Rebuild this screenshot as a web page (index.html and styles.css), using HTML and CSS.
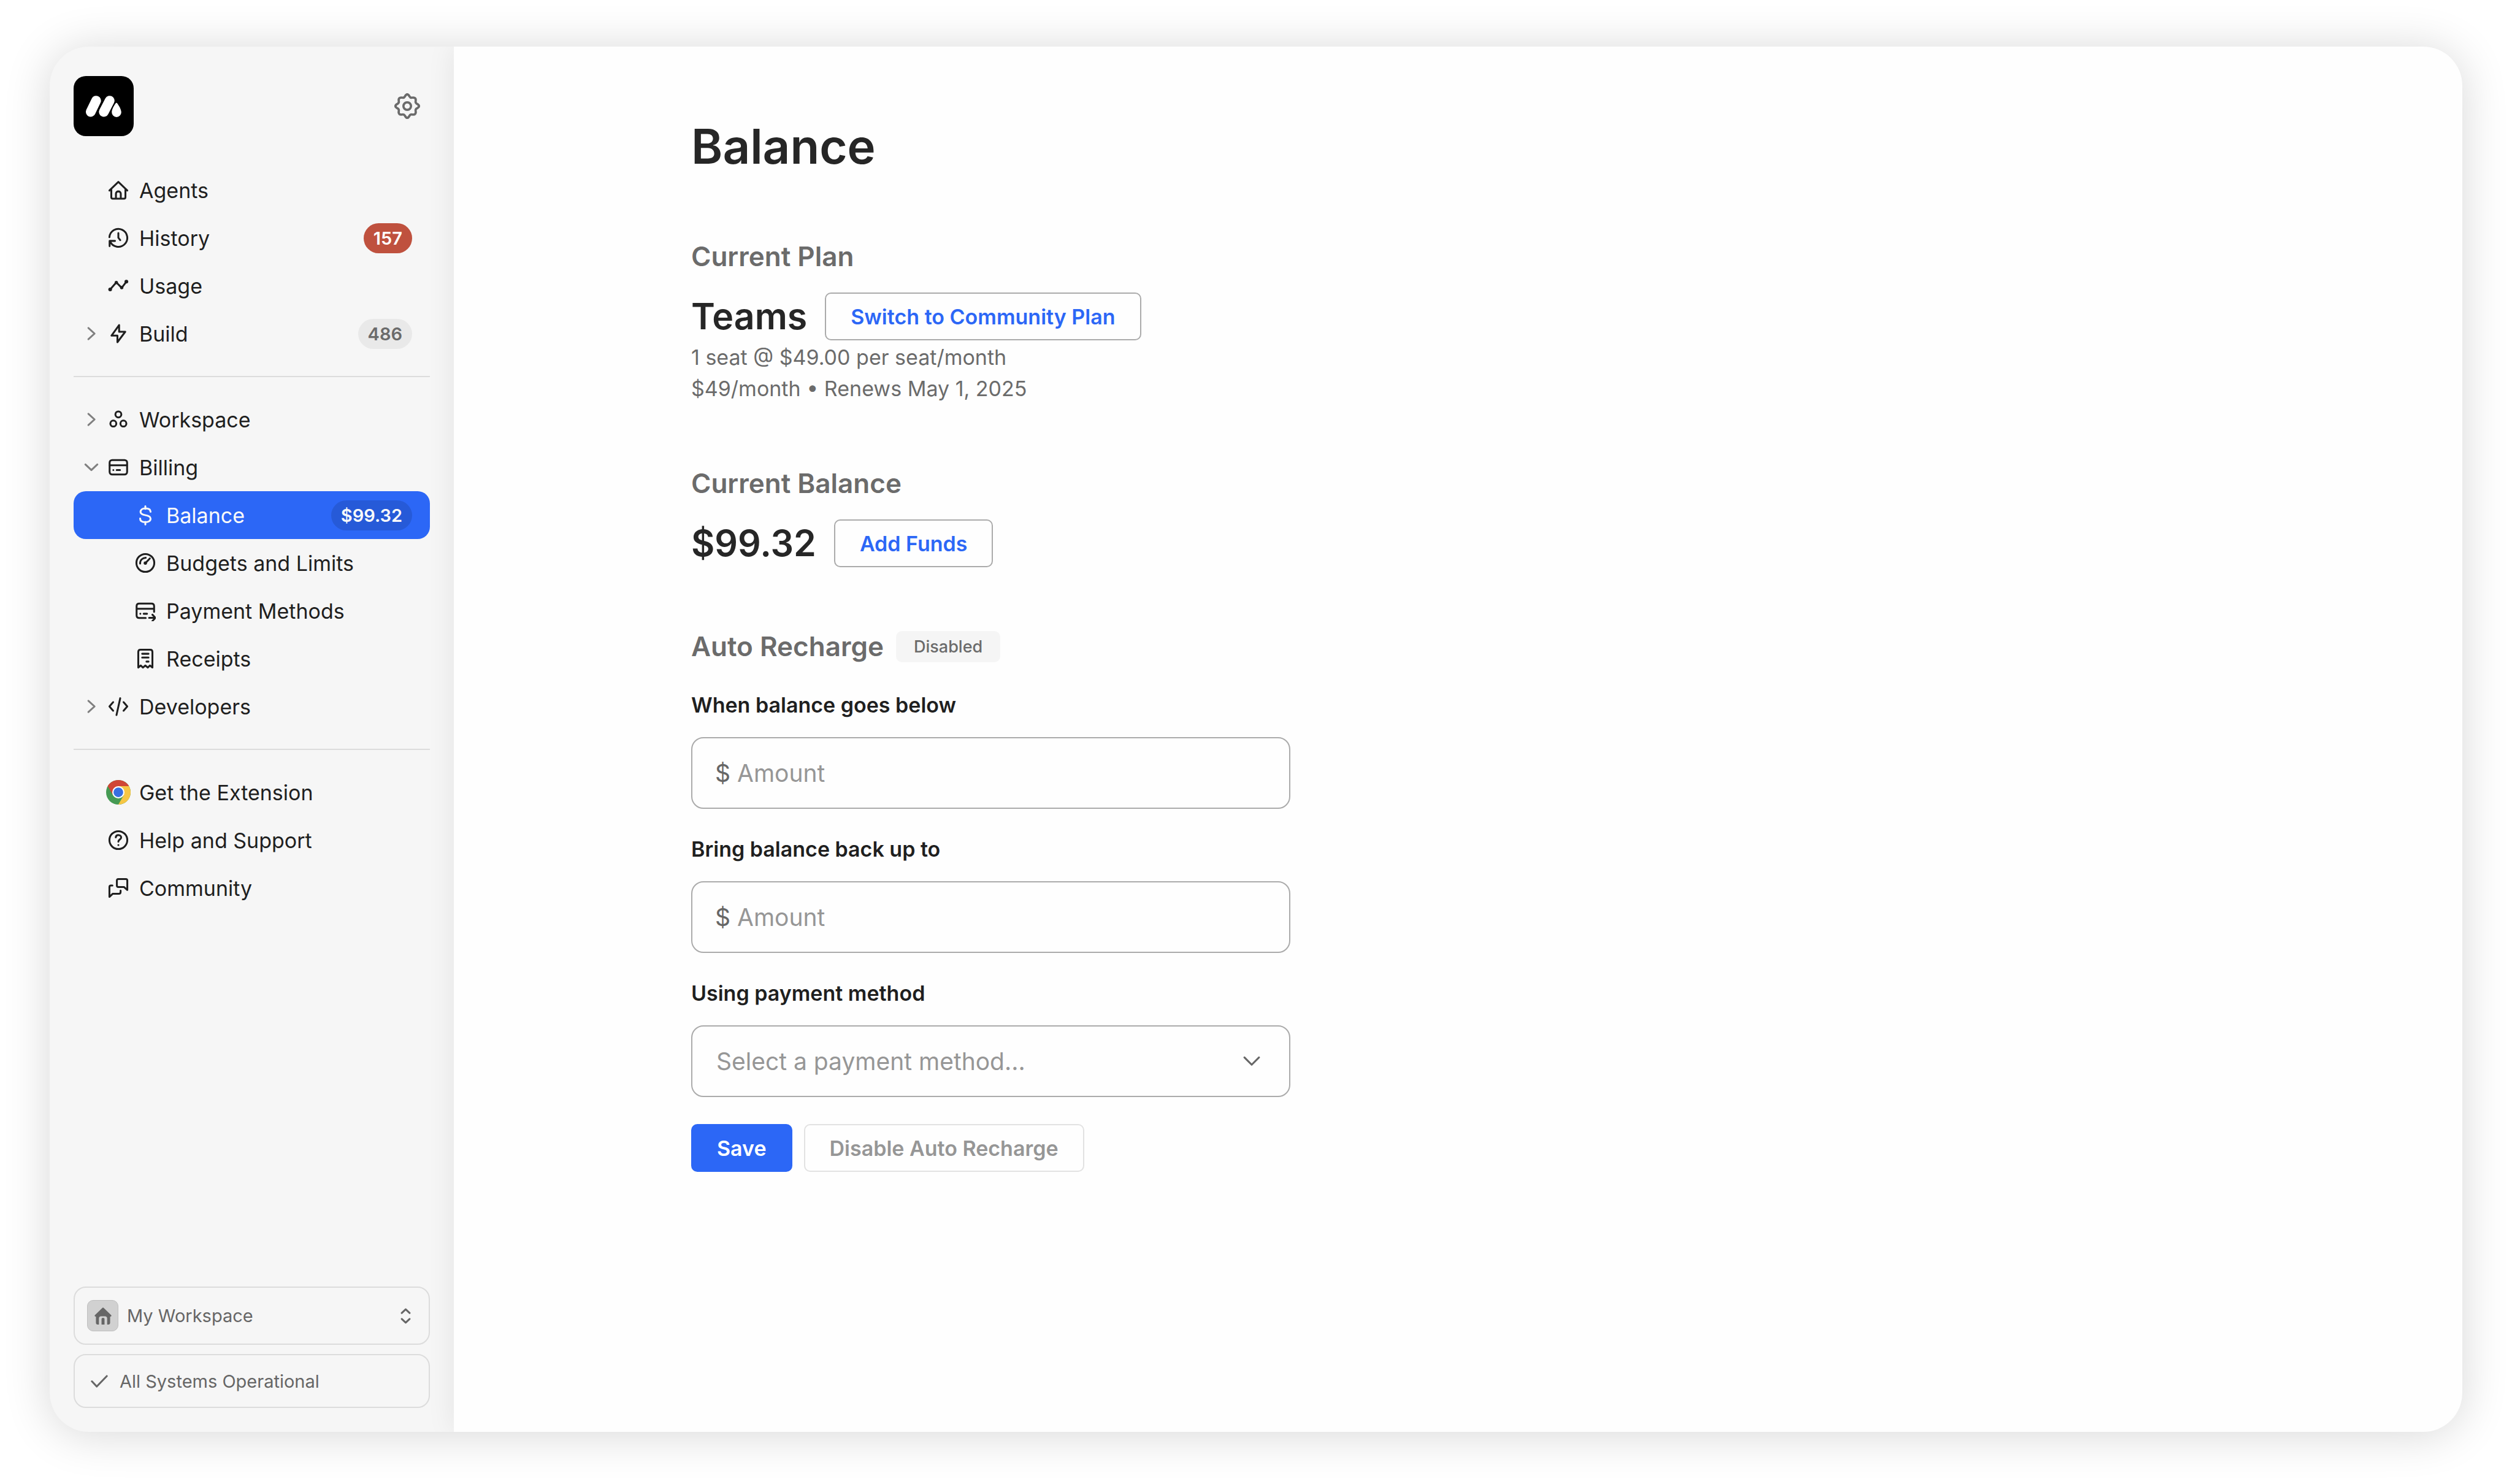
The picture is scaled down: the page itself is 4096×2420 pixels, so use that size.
FILE: index.html
```html
<!DOCTYPE html>
<html lang="en">
<head>
<meta charset="utf-8">
<title>Balance</title>
<meta name="viewport" content="width=device-width, initial-scale=1">
<link rel="stylesheet" href="styles.css">
</head>
<body>
<div class="window">
  <aside class="sidebar">
    <header class="sidebar-head">
      <a class="logo" href="#" aria-label="Home">
        <svg viewBox="0 0 160 160"><path d="M45.5 95.5 60 65.5M80.5 95.5 96 65.5" stroke="#fff" stroke-width="26" stroke-linecap="round"/><path d="M114 71c2 0 13 16 13 25.500a12.700 12.700 0 0 1-25.400 0C101.600 87 112 71 114 71z" fill="#fff"/></svg>
      </a>
      <button class="gear" type="button" aria-label="Settings">
        <svg class="line" viewBox="0 0 68 68"><circle cx="34" cy="34" r="10"/><path id="cog" d="M34 3C37.500 3 38.500 6 40 8.500 42 12 43.500 12.500 47 11.800 54 10.200 57.800 14 56.200 21 55.500 24.500 56 26 59.500 28 62 29.500 65 30.500 65 34"/><use href="#cog" transform="rotate(90 34 34)"/><use href="#cog" transform="rotate(180 34 34)"/><use href="#cog" transform="rotate(270 34 34)"/></svg>
      </button>
    </header>

    <nav class="nav" aria-label="Main">
      <ul class="nav-group">
        <li><a class="nav-item" href="#"><span class="chevron"></span><svg class="icon line" viewBox="0 0 56 56"><path d="M4 29 28 6l24 23M9 26v21q0 4 4 4h30q4 0 4-4V26M21.500 51V37.500c0-3.500 3-6 6.500-6s6.500 2.500 6.500 6V51"/></svg><span class="nav-label">Agents</span></a></li>
        <li><a class="nav-item" href="#"><span class="chevron"></span><svg class="icon line" viewBox="0 0 56 56"><path d="M4 26A24 24 0 1 1 6 37.500M4.500 50V36H19M28 15v12.500l5 6.500"/></svg><span class="nav-label">History</span><span class="badge badge-alert">157</span></a></li>
        <li><a class="nav-item" href="#"><span class="chevron"></span><svg class="icon line" viewBox="0 0 56 56"><path d="M6 38 22.500 19 37 33.500 49.500 17"/><g fill="currentColor" stroke="none"><circle cx="6" cy="38" r="5"/><circle cx="22.500" cy="19.500" r="4.500"/><circle cx="37" cy="33" r="4.500"/><circle cx="49.500" cy="17" r="5"/></g></svg><span class="nav-label">Usage</span></a></li>
        <li><a class="nav-item" href="#"><svg class="chevron line" viewBox="0 0 56 56"><path d="M20 13 36.500 28 20 43"/></svg><svg class="icon line" viewBox="0 0 56 56"><path d="M30 5 9.500 33.500h16V51l21-28H30z"/></svg><span class="nav-label">Build</span><span class="badge">486</span></a></li>
      </ul>
      <ul class="nav-group">
        <li><a class="nav-item" href="#"><svg class="chevron line" viewBox="0 0 56 56"><path d="M20 13 36.500 28 20 43"/></svg><svg class="icon line" viewBox="0 0 56 56"><circle cx="28" cy="14.500" r="8"/><circle cx="14.500" cy="39" r="8"/><circle cx="41.500" cy="39" r="8"/></svg><span class="nav-label">Workspace</span></a></li>
        <li><a class="nav-item" href="#"><svg class="chevron line" viewBox="0 0 56 56"><path d="M12 20.500 28 35.500 44 20.500"/></svg><svg class="icon line" viewBox="0 0 56 56"><rect x="4.500" y="8.500" width="47" height="39" rx="7"/><path d="M5 22.500h46M14.500 35.500h.1M23.500 35.500h9"/></svg><span class="nav-label">Billing</span></a>
          <ul class="subnav">
            <li><a class="nav-item active" href="#" aria-current="page"><svg class="icon line" viewBox="0 0 56 56"><path d="M28 4v7M28 46v7M42 19c0-6-6-9-14-9s-13 4-13 9.500c0 6 6 7.500 13 8.700 8 1.300 14 3.300 14 9.300s-6 9.500-14 9.500-14-3-14-10"/></svg><span class="nav-label">Balance</span><span class="badge">$99.32</span></a></li>
            <li><a class="nav-item" href="#"><svg class="icon line" viewBox="0 0 56 56"><circle cx="28" cy="28" r="24"/><path d="M14 29.500c0-9 6-15 15-15.500M29 27.500 40 16"/><circle cx="28" cy="28.500" r="4.500" fill="currentColor" stroke="none"/></svg><span class="nav-label">Budgets and Limits</span></a></li>
            <li><a class="nav-item" href="#"><svg class="icon line" viewBox="0 0 56 56"><path d="M29 47.500H11.500q-7 0-7-7v-25q0-7 7-7h33q7 0 7 7V31M5 22.500h46M14.500 36h.1M23.500 36h9M38 47h17M47 38.500l8 8.500-8 8.500"/></svg><span class="nav-label">Payment Methods</span></a></li>
            <li><a class="nav-item" href="#"><svg class="icon line" viewBox="0 0 56 56"><path d="M9 52V10q0-6 6-6h26q6 0 6 6v42l-6.500-5.500L34.500 52 28 46.500 21.500 52l-6-5.500zM19.500 15h17M19.500 25h17M31 36h5.500"/></svg><span class="nav-label">Receipts</span></a></li>
          </ul>
        </li>
        <li><a class="nav-item" href="#"><svg class="chevron line" viewBox="0 0 56 56"><path d="M20 13 36.500 28 20 43"/></svg><svg class="icon line" viewBox="0 0 56 56"><path d="M14 16.500 4 28l10 11.500M42 16.500 52 28 42 39.500M33 6 23 51"/></svg><span class="nav-label">Developers</span></a></li>
      </ul>
      <ul class="nav-group">
        <li><a class="nav-item" href="#"><span class="chevron"></span><svg class="icon brand" viewBox="0 0 64 64"><circle cx="32" cy="32" r="32" fill="#459a53"/><path d="M32 32 4.290 16A32 32 0 0 1 59.710 16z" fill="#d04636"/><path d="M4.290 16 18.140 40 32 32V16z" fill="#d04636"/><path d="M32 16h27.710A32 32 0 0 1 32 64l13.860-24z" fill="#f6c644"/><circle cx="32" cy="32" r="16" fill="#fff"/><circle cx="32" cy="32" r="12.600" fill="#376fe0"/></svg><span class="nav-label">Get the Extension</span></a></li>
        <li><a class="nav-item" href="#"><span class="chevron"></span><svg class="icon line" viewBox="0 0 56 56"><circle cx="28" cy="28" r="24"/><path d="M21 20.500c.5-4 3.500-6 7-6 4.500 0 7.500 2.800 7.500 6.500 0 5.500-7.500 5.500-7.500 11M28 41h.1"/></svg><span class="nav-label">Help and Support</span></a></li>
        <li><a class="nav-item" href="#"><span class="chevron"></span><svg class="icon line" viewBox="0 0 56 56"><path d="M28 4h20q4 0 4 4v25.500L43 25.500H28q-4 0-4-4V8q0-4 4-4zM12 21.500H8q-4 0-4 4V52l9-8.500h16q5 0 5-5V35"/></svg><span class="nav-label">Community</span></a></li>
      </ul>
    </nav>

    <footer class="sidebar-foot">
      <button class="switcher" type="button">
        <span class="avatar"><svg viewBox="0 0 46 46"><path d="M21 1.500q2-2 4 0L45 21q1.500 3-2 3.500h-1V41q0 5-5 5h-3V30q0-6-6-6h-10q-6 0-6 6v16H9q-5 0-5-5V24.500H3Q-.5 24 1 21z"/><path d="M19 46V31q0-3 4-3t4 3v15z"/></svg></span>
        <span class="switcher-name">My Workspace</span>
        <svg class="updown line" viewBox="0 0 28 42"><path d="M3.500 13 14 3l10.500 10M3.500 29 14 39l10.500-10"/></svg>
      </button>
      <a class="status" href="#">
        <svg class="check line" viewBox="0 0 46 34"><path d="M3 17 16 31 43 3"/></svg>
        <span>All Systems Operational</span>
      </a>
    </footer>
  </aside>

  <main class="main">
    <div class="content">
      <h1>Balance</h1>

      <section class="section">
        <h2>Current Plan</h2>
        <div class="value-row">
          <span class="value">Teams</span>
          <button class="btn btn-outline" type="button">Switch to Community Plan</button>
        </div>
        <p class="details">1 seat @ $49.00 per seat/month<br>$49/month • Renews May 1, 2025</p>
      </section>

      <section class="section">
        <h2>Current Balance</h2>
        <div class="value-row">
          <span class="value">$99.32</span>
          <button class="btn btn-outline" type="button">Add Funds</button>
        </div>
      </section>

      <section class="section">
        <div class="section-head">
          <h2>Auto Recharge</h2>
          <span class="chip">Disabled</span>
        </div>
        <form class="form">
          <div class="field">
            <label for="below">When balance goes below</label>
            <div class="control"><span class="prefix">$</span><input id="below" type="text" inputmode="decimal" placeholder="Amount"></div>
          </div>
          <div class="field">
            <label for="upto">Bring balance back up to</label>
            <div class="control"><span class="prefix">$</span><input id="upto" type="text" inputmode="decimal" placeholder="Amount"></div>
          </div>
          <div class="field">
            <label for="method">Using payment method</label>
            <div class="control control-select">
              <select id="method"><option value="">Select a payment method...</option></select>
              <svg class="caret line" viewBox="0 0 46 28"><path d="M3.500 4 23 23.500 42.500 4"/></svg>
            </div>
          </div>
          <div class="actions">
            <button class="btn btn-primary" type="submit">Save</button>
            <button class="btn btn-outline" type="button" disabled>Disable Auto Recharge</button>
          </div>
        </form>
      </section>
    </div>
  </main>
</div>
</body>
</html>
```
FILE: styles.css
```css
:root {
  --blue: #2c67f6;
  --ink: #1f1f1f;
  --muted: #6b6b6b;
  --faint: #969696;
  --line: #dcdcdc;
  --line-strong: #ababab;
}

* { box-sizing: border-box; }

body {
  margin: 0;
  min-height: 100vh;
  display: flex;
  padding: 76px 81px 85px;
  background: #fff;
  color: var(--ink);
  font-family: Inter, "Liberation Sans", sans-serif;
  font-size: 34px;
  line-height: 51px;
}

button, input, select { font: inherit; color: inherit; }
a { color: inherit; text-decoration: none; }
ul { list-style: none; margin: 0; padding: 0; }
h1, h2, p { margin: 0; }
svg { display: block; flex: none; }

.line {
  fill: none;
  stroke: currentColor;
  stroke-width: 5;
  stroke-linecap: round;
  stroke-linejoin: round;
}

.window {
  flex: 1;
  display: flex;
  border-radius: 64px;
  overflow: hidden;
  background: #f6f6f6;
  box-shadow: 0 4px 76px rgba(0, 0, 0, .16);
}

/* Sidebar */
.sidebar {
  flex: none;
  width: 659px;
  display: flex;
  flex-direction: column;
  padding: 48px 39px 39px;
}

.sidebar-head {
  display: flex;
  align-items: center;
  justify-content: space-between;
  padding-right: 16px;
}

.logo {
  width: 98px;
  height: 98px;
  border-radius: 20px;
  background: #000;
}

.gear {
  padding: 0;
  border: 0;
  background: none;
  color: var(--muted);
}

.gear svg { width: 42px; height: 42px; stroke-width: 6; }

.nav { padding-top: 49px; }

.nav-group + .nav-group {
  margin-top: 30px;
  padding-top: 30px;
  border-top: 2px solid var(--line);
}

.nav-item {
  display: flex;
  align-items: center;
  height: 78px;
  padding: 0 29px 0 12px;
  border-radius: 20px;
}

.chevron {
  width: 34px;
  height: 34px;
  margin-right: 10px;
  color: #808080;
}

.icon {
  width: 34px;
  height: 34px;
  margin-right: 17px;
}

.brand {
  width: 40px;
  height: 40px;
  margin-left: -3px;
  margin-right: 14px;
}

.nav-label { flex: 1; }

.subnav .nav-item { padding-left: 100px; }

.active { background: var(--blue); color: #fafafa; }

.badge {
  padding: 0 16px;
  border-radius: 25px;
  background: rgba(0, 0, 0, .05);
  color: var(--muted);
  font-size: 29px;
  line-height: 49px;
  font-weight: 600;
}

.badge-alert { background: #bf513e; color: #fff; }
.active .badge { background: rgba(0, 0, 0, .12); color: inherit; }

.sidebar-foot {
  display: flex;
  flex-direction: column;
  gap: 15px;
  margin-top: auto;
  color: #666;
  font-size: 29px;
}

.switcher, .status {
  display: flex;
  align-items: center;
  border: 2px solid var(--line);
  border-radius: 20px;
  background: none;
}

.switcher {
  height: 95px;
  padding: 0 25px 0 20px;
  text-align: left;
}

.switcher-name { flex: 1; }

.avatar {
  display: grid;
  place-items: center;
  width: 51px;
  height: 51px;
  margin-right: 14px;
  border: 1px solid #bfbfbf;
  border-radius: 10px;
  background: #d1d1d1;
}

.avatar svg { width: 28px; height: 28px; fill: currentColor; }

.updown { width: 17px; height: 26px; margin-right: 4px; }

.status { height: 88px; padding: 0 26px; }

.check { width: 28px; height: 21px; margin-right: 19px; }

/* Main panel */
.main {
  flex: 1;
  padding: 116px 39px;
  background: #fefefe;
  box-shadow: 0 0 44px rgba(0, 0, 0, .08);
}

.content {
  max-width: 2501px;
  margin: 0 auto;
}

h1 {
  margin-bottom: 105px;
  color: #262626;
  font-size: 78px;
  line-height: 94px;
  font-weight: 600;
}

h2 {
  color: var(--muted);
  font-size: 44px;
  line-height: 54px;
  font-weight: 600;
}

.section + .section { margin-top: 102px; }

.value-row {
  display: flex;
  align-items: center;
  gap: 29px;
  margin-top: 32px;
}

.value {
  color: #262626;
  font-size: 59px;
  line-height: 78px;
  font-weight: 600;
}

.details { margin-top: 2px; color: var(--muted); }

.btn {
  height: 78px;
  padding: 0 40px;
  border: 2px solid var(--line-strong);
  border-radius: 10px;
  background: none;
  font-weight: 600;
}

.btn-outline { color: var(--blue); }
.btn-outline:disabled { border-color: #e2e2e2; color: var(--faint); }
.btn-primary { border-color: var(--blue); background: var(--blue); color: #fff; }

.section-head {
  display: flex;
  align-items: center;
  gap: 20px;
}

.chip {
  padding: 0 29px;
  border-radius: 10px;
  background: #f5f5f5;
  color: var(--muted);
  font-size: 27px;
  font-weight: 500;
}

.form {
  display: flex;
  flex-direction: column;
  gap: 40px;
  max-width: 977px;
  margin-top: 43px;
}

.field {
  display: flex;
  flex-direction: column;
  gap: 27px;
}

.field label { font-weight: 600; }

.control {
  display: flex;
  align-items: center;
  height: 117px;
  padding: 0 37px;
  border: 2px solid var(--line-strong);
  border-radius: 20px;
  font-size: 39px;
}

.prefix { margin-right: 11px; color: #666; }

.control input {
  flex: 1;
  min-width: 0;
  padding: 0;
  border: 0;
  outline: 0;
  background: none;
}

.control input::placeholder { color: var(--faint); opacity: 1; }

.control-select { display: grid; padding: 0; }
.control-select > * { grid-area: 1 / 1; }

.control-select select {
  height: 113px;
  padding: 0 39px;
  border: 0;
  outline: 0;
  appearance: none;
  background: none;
  color: var(--faint);
}

.caret {
  justify-self: end;
  width: 28px;
  height: 17px;
  margin-right: 47px;
  color: #666;
  pointer-events: none;
}

.actions {
  display: flex;
  gap: 19px;
  margin-top: 4px;
}
```
